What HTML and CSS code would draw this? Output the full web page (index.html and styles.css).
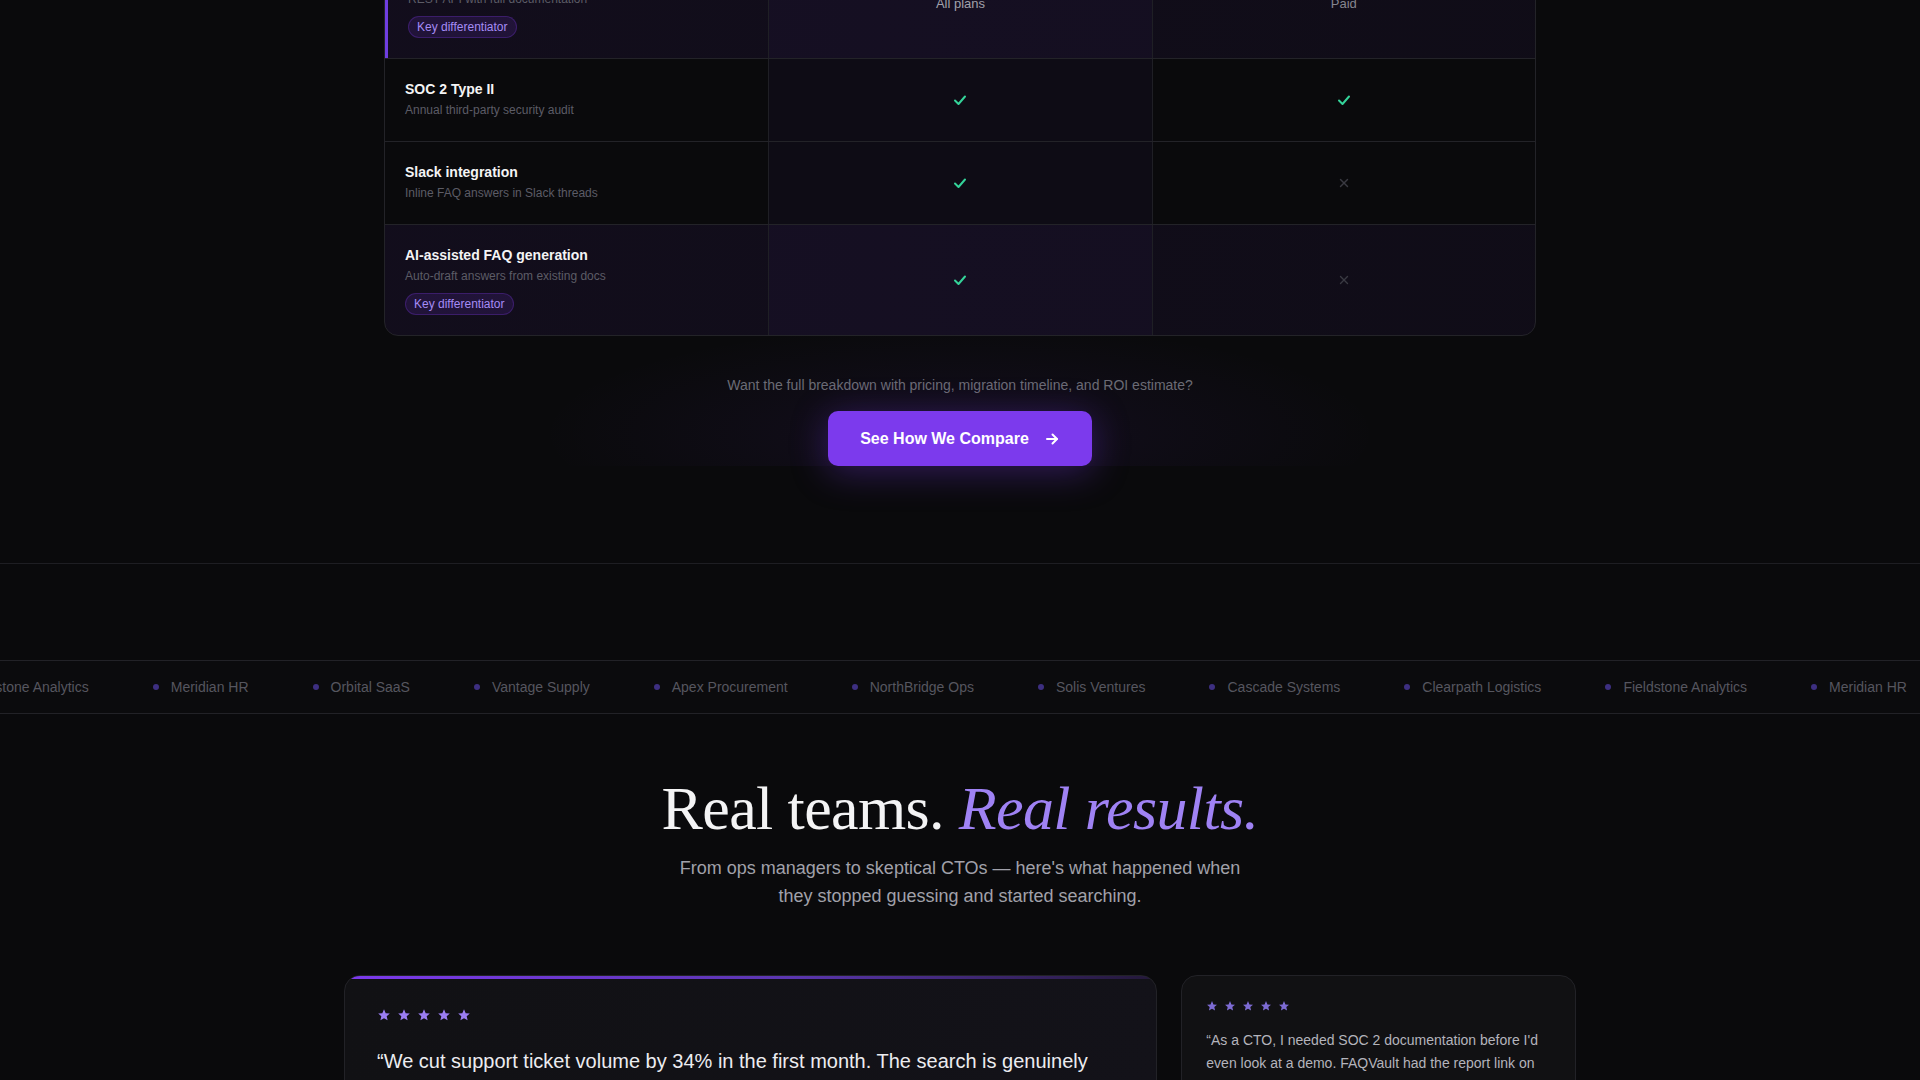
FILE: index.html
```html
<!DOCTYPE html>
<html lang="en">
<head>
    <meta charset="UTF-8">
    <meta name="viewport" content="width=device-width, initial-scale=1.0">
    <title>FAQVault — Compare</title>
    <link rel="stylesheet" href="styles.css">
</head>
<body>
    <section class="compare">
        <div class="table">
            <div class="row hl active">
                <div class="cell feature">
                    <div class="f-title">Public API</div>
                    <div class="f-sub">REST API with full documentation</div>
                    <span class="badge">Key differentiator</span>
                </div>
                <div class="cell ours"><span class="val">All plans</span></div>
                <div class="cell"><span class="val dim">Paid</span></div>
            </div>
            <div class="row">
                <div class="cell feature">
                    <div class="f-title">SOC 2 Type II</div>
                    <div class="f-sub">Annual third-party security audit</div>
                </div>
                <div class="cell ours">
                    <svg class="check" viewBox="0 0 16 16"><polyline points="3,8.5 6.5,12 13,4.5"/></svg>
                </div>
                <div class="cell">
                    <svg class="check" viewBox="0 0 16 16"><polyline points="3,8.5 6.5,12 13,4.5"/></svg>
                </div>
            </div>
            <div class="row">
                <div class="cell feature">
                    <div class="f-title">Slack integration</div>
                    <div class="f-sub">Inline FAQ answers in Slack threads</div>
                </div>
                <div class="cell ours">
                    <svg class="check" viewBox="0 0 16 16"><polyline points="3,8.5 6.5,12 13,4.5"/></svg>
                </div>
                <div class="cell">
                    <svg class="cross" viewBox="0 0 16 16"><line x1="4" y1="4" x2="12" y2="12"/><line x1="12" y1="4" x2="4" y2="12"/></svg>
                </div>
            </div>
            <div class="row hl">
                <div class="cell feature">
                    <div class="f-title">AI-assisted FAQ generation</div>
                    <div class="f-sub">Auto-draft answers from existing docs</div>
                    <span class="badge">Key differentiator</span>
                </div>
                <div class="cell ours">
                    <svg class="check" viewBox="0 0 16 16"><polyline points="3,8.5 6.5,12 13,4.5"/></svg>
                </div>
                <div class="cell">
                    <svg class="cross" viewBox="0 0 16 16"><line x1="4" y1="4" x2="12" y2="12"/><line x1="12" y1="4" x2="4" y2="12"/></svg>
                </div>
            </div>
        </div>

        <div class="cta">
            <p>Want the full breakdown with pricing, migration timeline, and ROI estimate?</p>
            <a class="btn" href="#">
                See How We Compare
                <svg viewBox="0 0 16 16"><line x1="3" y1="8" x2="13" y2="8"/><polyline points="8.5,3.5 13,8 8.5,12.5"/></svg>
            </a>
        </div>
    </section>

    <section class="logos">
        <div class="marquee">
            <div class="track">
                <span class="logo">Fieldstone Analytics</span>
                <span class="logo">Meridian HR</span>
                <span class="logo">Orbital SaaS</span>
                <span class="logo">Vantage Supply</span>
                <span class="logo">Apex Procurement</span>
                <span class="logo">NorthBridge Ops</span>
                <span class="logo">Solis Ventures</span>
                <span class="logo">Cascade Systems</span>
                <span class="logo">Clearpath Logistics</span>
                <span class="logo">Fieldstone Analytics</span>
                <span class="logo">Meridian HR</span>
                <span class="logo">Orbital SaaS</span>
                <span class="logo">Vantage Supply</span>
            </div>
        </div>
    </section>

    <section class="testimonials">
        <h2>Real teams. <em>Real results.</em></h2>
        <p class="lead">From ops managers to skeptical CTOs — here's what happened when they stopped guessing and started searching.</p>

        <div class="cards">
            <div class="card featured">
                <div class="stars big">
                    <svg viewBox="0 0 24 24"><path d="M12 2l2.9 6.9 7.1.6-5.4 4.7 1.6 7-6.2-3.8-6.2 3.8 1.6-7L2 9.5l7.1-.6z"/></svg>
                    <svg viewBox="0 0 24 24"><path d="M12 2l2.9 6.9 7.1.6-5.4 4.7 1.6 7-6.2-3.8-6.2 3.8 1.6-7L2 9.5l7.1-.6z"/></svg>
                    <svg viewBox="0 0 24 24"><path d="M12 2l2.9 6.9 7.1.6-5.4 4.7 1.6 7-6.2-3.8-6.2 3.8 1.6-7L2 9.5l7.1-.6z"/></svg>
                    <svg viewBox="0 0 24 24"><path d="M12 2l2.9 6.9 7.1.6-5.4 4.7 1.6 7-6.2-3.8-6.2 3.8 1.6-7L2 9.5l7.1-.6z"/></svg>
                    <svg viewBox="0 0 24 24"><path d="M12 2l2.9 6.9 7.1.6-5.4 4.7 1.6 7-6.2-3.8-6.2 3.8 1.6-7L2 9.5l7.1-.6z"/></svg>
                </div>
                <p class="quote">“We cut support ticket volume by 34% in the first month. The search is genuinely instant — our customers actually find answers now instead of opening a ticket.”</p>
            </div>
            <div class="card">
                <div class="stars">
                    <svg viewBox="0 0 24 24"><path d="M12 2l2.9 6.9 7.1.6-5.4 4.7 1.6 7-6.2-3.8-6.2 3.8 1.6-7L2 9.5l7.1-.6z"/></svg>
                    <svg viewBox="0 0 24 24"><path d="M12 2l2.9 6.9 7.1.6-5.4 4.7 1.6 7-6.2-3.8-6.2 3.8 1.6-7L2 9.5l7.1-.6z"/></svg>
                    <svg viewBox="0 0 24 24"><path d="M12 2l2.9 6.9 7.1.6-5.4 4.7 1.6 7-6.2-3.8-6.2 3.8 1.6-7L2 9.5l7.1-.6z"/></svg>
                    <svg viewBox="0 0 24 24"><path d="M12 2l2.9 6.9 7.1.6-5.4 4.7 1.6 7-6.2-3.8-6.2 3.8 1.6-7L2 9.5l7.1-.6z"/></svg>
                    <svg viewBox="0 0 24 24"><path d="M12 2l2.9 6.9 7.1.6-5.4 4.7 1.6 7-6.2-3.8-6.2 3.8 1.6-7L2 9.5l7.1-.6z"/></svg>
                </div>
                <p class="quote small">“As a CTO, I needed SOC 2 documentation before I'd even look at a demo. FAQVault had the report link on their trust page. That alone got them on the shortlist.”</p>
            </div>
        </div>
    </section>
</body>
</html>
```

FILE: styles.css
```css
* {
    box-sizing: border-box;
}

body {
    margin: 0;
    background: #0a0a0c;
    color: #f4f4f5;
    font-family: "Liberation Sans", Arial, sans-serif;
    overflow: hidden;
}

/* comparison table */

.compare {
    padding-bottom: 97px;
    border-bottom: 1px solid #1e1e23;
}

.table {
    width: 1152px;
    margin: -53px auto 0;
    border: 1px solid #232328;
    border-radius: 14px;
    overflow: hidden;
}

.row {
    display: grid;
    grid-template-columns: 1fr 1fr 1fr;
    border-bottom: 1px solid #232328;
}

.row:last-child {
    border-bottom: none;
}

.row.hl {
    background: linear-gradient(90deg, rgba(124, 58, 237, 0.07), rgba(124, 58, 237, 0.05));
}

.row.hl .feature {
    padding-bottom: 20px;
}

.row.active .feature {
    border-left: 3px solid #6f3ee0;
    padding-left: 20px;
}

.cell {
    display: flex;
    align-items: center;
    justify-content: center;
    border-left: 1px solid #1f1f25;
}

.cell:first-child {
    border-left: none;
}

.cell.ours {
    background: rgba(124, 58, 237, 0.045);
}

.feature {
    display: block;
    padding: 20px 20px 22px;
}

.f-title {
    font-size: 14px;
    font-weight: bold;
    line-height: 21px;
    color: #f4f4f5;
}

.f-sub {
    margin-top: 1px;
    font-size: 12px;
    line-height: 18px;
    color: #5c5c66;
}

.badge {
    display: inline-block;
    margin-top: 8px;
    padding: 0 8px;
    font-size: 12px;
    line-height: 20px;
    color: #a58bf5;
    background: rgba(124, 58, 237, 0.14);
    border: 1px solid rgba(124, 58, 237, 0.28);
    border-radius: 999px;
}

.val {
    font-size: 13px;
    color: #a1a1aa;
}

.val.dim {
    color: #85858f;
}

.check {
    width: 16px;
    height: 16px;
    fill: none;
    stroke: #34d399;
    stroke-width: 2;
    stroke-linecap: round;
    stroke-linejoin: round;
}

.cross {
    width: 14px;
    height: 14px;
    stroke: #3a3a42;
    stroke-width: 1.6;
    stroke-linecap: round;
}

/* call to action */

.cta {
    padding-top: 39px;
    text-align: center;
    background: radial-gradient(ellipse 420px 110px at 50% 75%, rgba(124, 58, 237, 0.08), transparent);
}

.cta p {
    margin: 0 0 15px;
    font-size: 14px;
    line-height: 21px;
    color: #6b6b75;
}

.btn {
    display: inline-flex;
    align-items: center;
    gap: 15px;
    height: 55px;
    padding: 0 32px;
    font-size: 16px;
    font-weight: bold;
    color: #fff;
    text-decoration: none;
    background: #7c3aed;
    border-radius: 10px;
    box-shadow: 0 6px 36px rgba(124, 58, 237, 0.35);
}

.btn svg {
    width: 16px;
    height: 16px;
    fill: none;
    stroke: #fff;
    stroke-width: 2;
    stroke-linecap: round;
    stroke-linejoin: round;
}

/* logo strip */

.logos {
    padding-top: 96px;
}

.marquee {
    overflow: hidden;
    padding: 16px 0;
    background: #0b0b0d;
    border-top: 1px solid #222227;
    border-bottom: 1px solid #222227;
}

.track {
    display: flex;
    white-space: nowrap;
    transform: translateX(-85px);
}

.logo {
    display: flex;
    align-items: center;
    gap: 12px;
    margin: 0 32px;
    font-size: 14px;
    line-height: 20px;
    color: #56565f;
}

.logo::before {
    content: "";
    width: 6px;
    height: 6px;
    border-radius: 50%;
    background: #3d2f80;
}

/* testimonials */

.testimonials {
    padding-top: 59px;
    text-align: center;
}

.testimonials h2 {
    margin: 0 0 11px;
    font-family: "Liberation Serif", "Times New Roman", serif;
    font-size: 62px;
    font-weight: normal;
    line-height: 70px;
    letter-spacing: -0.01em;
    color: #f4f4f5;
}

.testimonials h2 em {
    color: #9f82f4;
}

.lead {
    width: 580px;
    margin: 0 auto;
    font-size: 18px;
    line-height: 28px;
    color: #a1a1aa;
}

.cards {
    display: grid;
    grid-template-columns: repeat(3, 1fr);
    gap: 24px;
    width: 1232px;
    margin: 65px auto 0;
    text-align: left;
}

.card {
    position: relative;
    padding: 24px;
    background: #111113;
    border: 1px solid #222227;
    border-radius: 16px;
    overflow: hidden;
}

.card.featured {
    grid-column: span 2;
    padding: 32px;
    background: linear-gradient(100deg, #111114, #131219);
}

.card.featured::before {
    content: "";
    position: absolute;
    top: 0;
    left: 0;
    right: 0;
    height: 3px;
    background: linear-gradient(90deg, #7c3aed, #5b36b0 55%, rgba(124, 58, 237, 0.15));
}

.stars {
    display: flex;
    gap: 6px;
}

.stars svg {
    width: 12px;
    height: 12px;
    fill: #7d6bd3;
}

.stars.big svg {
    width: 14px;
    height: 14px;
    fill: #9a7df3;
}

.quote {
    margin: 24px 0 0;
    font-size: 20px;
    line-height: 30px;
    color: #ececf0;
}

.quote.small {
    margin-top: 17px;
    font-size: 14px;
    line-height: 23px;
    color: #b4b4bc;
}
```
